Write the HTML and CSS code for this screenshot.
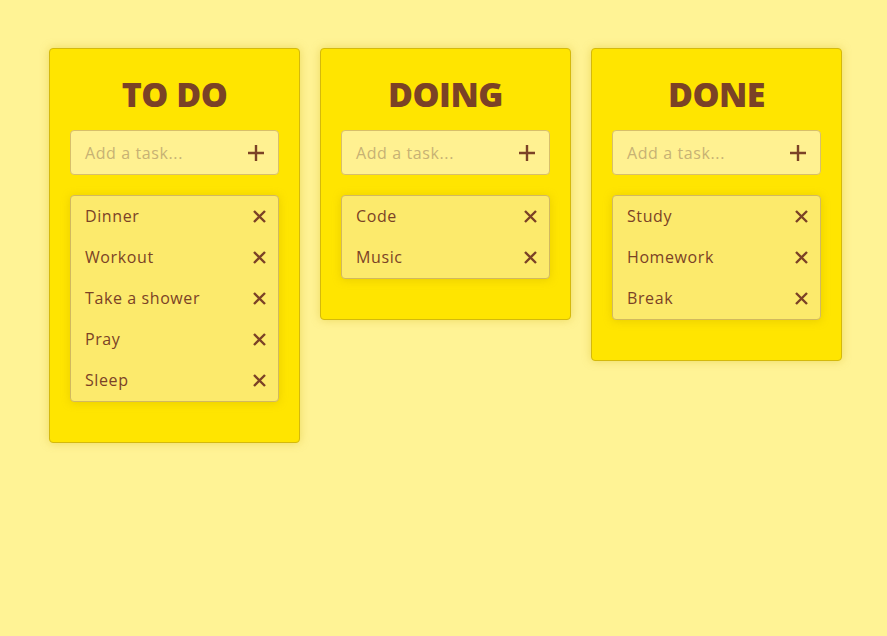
FILE: index.html
```html
<!DOCTYPE html>
<html lang="en">
<head>
<meta charset="utf-8">
<title>Kanban</title>
<link rel="stylesheet" href="styles.css">
</head>
<body>
<main class="board">
  <section class="column">
    <h2 class="title">TO DO</h2>
    <div class="add">
      <span class="placeholder">Add a task...</span>
      <svg class="plus" viewBox="0 0 16 16" width="16" height="16"><path d="M8 0v16M0 8h16" stroke="currentColor" stroke-width="2.4" fill="none"/></svg>
    </div>
    <ul class="tasks">
      <li class="task"><span>Dinner</span><svg class="del" viewBox="0 0 13 13" width="13" height="13"><path d="M1 1l11 11M12 1L1 12" stroke="currentColor" stroke-width="2.4" fill="none"/></svg></li>
      <li class="task"><span>Workout</span><svg class="del" viewBox="0 0 13 13" width="13" height="13"><path d="M1 1l11 11M12 1L1 12" stroke="currentColor" stroke-width="2.4" fill="none"/></svg></li>
      <li class="task"><span>Take a shower</span><svg class="del" viewBox="0 0 13 13" width="13" height="13"><path d="M1 1l11 11M12 1L1 12" stroke="currentColor" stroke-width="2.4" fill="none"/></svg></li>
      <li class="task"><span>Pray</span><svg class="del" viewBox="0 0 13 13" width="13" height="13"><path d="M1 1l11 11M12 1L1 12" stroke="currentColor" stroke-width="2.4" fill="none"/></svg></li>
      <li class="task"><span>Sleep</span><svg class="del" viewBox="0 0 13 13" width="13" height="13"><path d="M1 1l11 11M12 1L1 12" stroke="currentColor" stroke-width="2.4" fill="none"/></svg></li>
    </ul>
  </section>
  <section class="column">
    <h2 class="title">DOING</h2>
    <div class="add">
      <span class="placeholder">Add a task...</span>
      <svg class="plus" viewBox="0 0 16 16" width="16" height="16"><path d="M8 0v16M0 8h16" stroke="currentColor" stroke-width="2.4" fill="none"/></svg>
    </div>
    <ul class="tasks">
      <li class="task"><span>Code</span><svg class="del" viewBox="0 0 13 13" width="13" height="13"><path d="M1 1l11 11M12 1L1 12" stroke="currentColor" stroke-width="2.4" fill="none"/></svg></li>
      <li class="task"><span>Music</span><svg class="del" viewBox="0 0 13 13" width="13" height="13"><path d="M1 1l11 11M12 1L1 12" stroke="currentColor" stroke-width="2.4" fill="none"/></svg></li>
    </ul>
  </section>
  <section class="column">
    <h2 class="title">DONE</h2>
    <div class="add">
      <span class="placeholder">Add a task...</span>
      <svg class="plus" viewBox="0 0 16 16" width="16" height="16"><path d="M8 0v16M0 8h16" stroke="currentColor" stroke-width="2.4" fill="none"/></svg>
    </div>
    <ul class="tasks">
      <li class="task"><span>Study</span><svg class="del" viewBox="0 0 13 13" width="13" height="13"><path d="M1 1l11 11M12 1L1 12" stroke="currentColor" stroke-width="2.4" fill="none"/></svg></li>
      <li class="task"><span>Homework</span><svg class="del" viewBox="0 0 13 13" width="13" height="13"><path d="M1 1l11 11M12 1L1 12" stroke="currentColor" stroke-width="2.4" fill="none"/></svg></li>
      <li class="task"><span>Break</span><svg class="del" viewBox="0 0 13 13" width="13" height="13"><path d="M1 1l11 11M12 1L1 12" stroke="currentColor" stroke-width="2.4" fill="none"/></svg></li>
    </ul>
  </section>
</main>
</body>
</html>
```
FILE: styles.css
```css
* { box-sizing: border-box; }
html, body { margin: 0; padding: 0; }
body {
  background: #fff395;
  font-family: "Open Sans", "Noto Sans", sans-serif;
  color: #7b4226;
  min-height: 636px;
}
.board {
  display: flex;
  align-items: flex-start;
  gap: 20px;
  padding: 48px 0 0 49px;
}
.column {
  width: 251px;
  background: #ffe500;
  border: 1px solid #d4b90c;
  border-radius: 4px;
  padding: 20px 20px 40px;
  box-shadow: 0 0 10px rgba(200, 170, 0, 0.35);
}
.title {
  margin: 0 0 10px;
  font-size: 34px;
  line-height: 51px;
  font-weight: 800;
  text-align: center;
  letter-spacing: -0.5px;
}
.add {
  height: 45px;
  background: #fff191;
  border: 1px solid #d8bf6a;
  border-radius: 4px;
  display: flex;
  align-items: center;
  justify-content: space-between;
  padding: 0 14px 0 14px;
  margin-bottom: 20px;
}
.placeholder {
  font-size: 16px;
  letter-spacing: 0.6px;
  color: #c7b274;
}
.plus { display: block; }
.tasks {
  list-style: none;
  margin: 0;
  padding: 0;
  background: #fcea6c;
  border: 1px solid #d2b95e;
  border-radius: 4px;
  box-shadow: 0 1px 8px rgba(190, 160, 0, 0.35);
}
.task {
  height: 41px;
  display: flex;
  align-items: center;
  justify-content: space-between;
  padding: 0 12px 2px 14px;
  font-size: 16px;
  letter-spacing: 0.6px;
  font-weight: 500;
}
.del { display: block; margin-top: 2px; }
```
